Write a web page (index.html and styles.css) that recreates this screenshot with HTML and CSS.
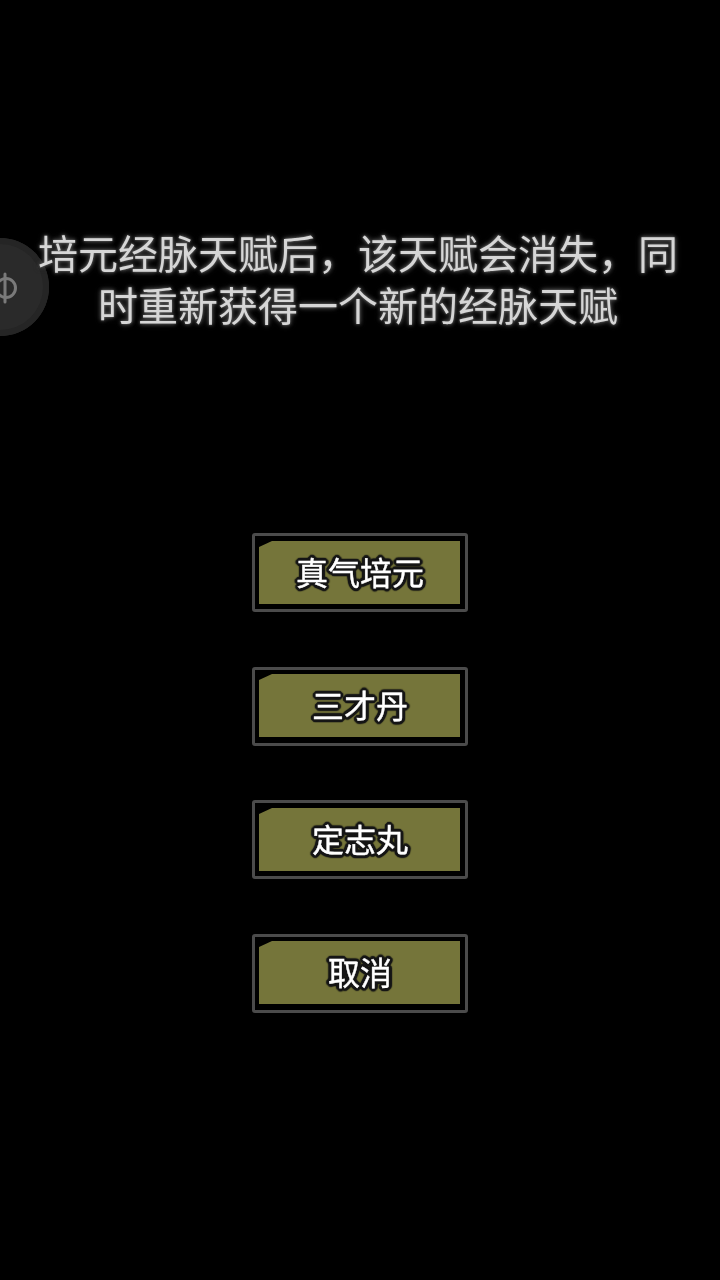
FILE: index.html
```html
<!DOCTYPE html>
<html lang="zh-CN">
<head>
  <meta charset="utf-8">
  <title>经脉天赋</title>
  <link rel="stylesheet" href="styles.css">
</head>
<body>
  <!-- floating ball, half off the screen -->
  <div class="float-ball">
    <svg class="float-ball__icon" width="24" height="36" viewBox="0 0 24 36">
      <circle cx="6" cy="18" r="9.500" fill="none" stroke="#7a7a7a" stroke-width="3"/>
      <path d="M5 4 V32" fill="none" stroke="#7a7a7a" stroke-width="3" stroke-linecap="round"/>
    </svg>
  </div>

  <main class="dialog">
    <p class="dialog__text">培元经脉天赋后，该天赋会消失，同时重新获得一个新的经脉天赋</p>

    <div class="choices">
      <button class="choice"><span class="choice__face">真气培元</span></button>
      <button class="choice"><span class="choice__face">三才丹</span></button>
      <button class="choice"><span class="choice__face">定志丸</span></button>
      <button class="choice"><span class="choice__face">取消</span></button>
    </div>
  </main>
</body>
</html>
```

FILE: styles.css
```css
html, body {
  margin: 0;
  height: 100%;
  background: #000;
}

body {
  font-family: "Noto Sans CJK SC", "Noto Sans", sans-serif;
  overflow: hidden;
}

.dialog {
  display: flex;
  flex-direction: column;
  align-items: center;
  padding-top: 225.500px;
}

.dialog__text {
  width: 640px;
  height: 104px;
  margin: 0 4px 203.500px 0;
  color: #d6d6d6;
  font-size: 40px;
  line-height: 52px;
  text-align: center;
  text-shadow: 0 0 2px #666, 0 0 4px #555, 0 0 6px #444;
  will-change: transform;
}

.choices {
  display: flex;
  flex-direction: column;
  gap: 54.670px;
}

.choice {
  display: block;
  box-sizing: border-box;
  width: 216px;
  height: 79px;
  padding: 4.500px 5px 5.500px 4px;
  background: #000;
  border: 3px solid #4b4b4b;
  border-radius: 3px;
}

.choice__face {
  display: flex;
  align-items: center;
  justify-content: center;
  height: 100%;
  padding-top: 3px;
  box-sizing: border-box;
  background: #75753a;
  clip-path: polygon(13px 0, 100% 0, 100% 100%, 0 100%, 0 6px);
  color: #fff;
  font-family: inherit;
  font-size: 32px;
  line-height: 1;
  -webkit-text-stroke: 0.4px #fff;
  /* rounded dark outline round the label */
  text-shadow: 3px 0 1px #161616, -3px 0 1px #161616, 0 3px 1px #161616, 0 -3px 1px #161616,
    2px 2px 1px #161616, -2px 2px 1px #161616, 2px -2px 1px #161616, -2px -2px 1px #161616,
    3px 1px 1px #161616, -3px 1px 1px #161616, 3px -1px 1px #161616, -3px -1px 1px #161616,
    1px 3px 1px #161616, -1px 3px 1px #161616, 1px -3px 1px #161616, -1px -3px 1px #161616;
  will-change: transform;
}

.float-ball {
  position: absolute;
  left: -49px;
  top: 238px;
  width: 98px;
  height: 98px;
  border-radius: 50%;
  background: #2a2a2a;
  box-shadow: inset 0 0 0 6px #252525;
}

.float-ball__icon {
  position: absolute;
  left: 49px;
  top: 32px;
}
```
